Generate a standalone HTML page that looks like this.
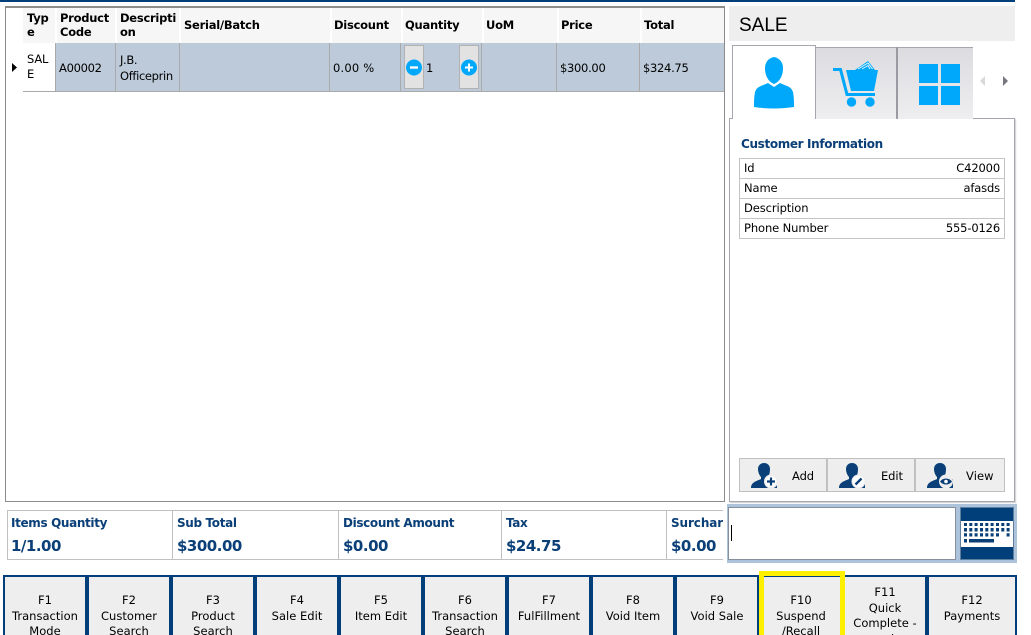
<!DOCTYPE html>
<html><head><meta charset="utf-8"><style>
html,body{margin:0;padding:0;background:#fff}
#p{position:relative;width:1031px;height:635px;overflow:hidden;background:#fff;font-family:"DejaVu Sans","Liberation Sans",sans-serif;font-size:11.5px;color:#000}
#p div,#p span{position:absolute;box-sizing:border-box}
.t{white-space:nowrap;line-height:14px}
.h{font-weight:bold;font-size:11.5px;line-height:14px;white-space:nowrap;letter-spacing:-.25px;color:#000}
.v{position:absolute;width:1px;background:#a9a9a9}
.w{position:absolute;width:2px;background:#fff}
.l{font-weight:bold;font-size:12px;color:#0a3f77;white-space:nowrap;letter-spacing:-.35px;line-height:14px}
.n{font-weight:bold;font-size:15px;color:#0a3f77;white-space:nowrap;line-height:18px;letter-spacing:-.5px}
.f{top:577px;height:58px;width:80px;background:#eee;text-align:center;line-height:15.5px;font-size:11.5px;letter-spacing:.02px;padding-top:16px;white-space:nowrap;color:#000}
.f.o{padding-top:8px}
.r{left:740px;width:264px;height:20px;border-bottom:1px solid #c4c4c4;line-height:19px;padding:0 4px;letter-spacing:-.1px}
.r b{font-weight:normal;position:absolute;right:4px;top:0;letter-spacing:-.15px}
.b{top:458px;height:34px;background:#eee;border:1px solid #c0c0c0}
</style></head><body><div id="p">
<div style="left:0;top:0;width:1015px;height:2px;background:#003f7a"></div>

<div style="left:5px;top:6px;width:720px;height:496px;border:1px solid #8c8c8c;border-top-width:2px;background:#fff"></div>
<div style="left:23px;top:8px;width:701px;height:35px;background:#f6f6f6"></div>
<div style="left:23px;top:43px;width:33px;height:48px;background:#fff"></div>
<div style="left:56px;top:43px;width:668px;height:48px;background:#bccad9"></div>
<div style="left:23px;top:91px;width:701px;height:1px;background:#a9a9a9"></div>
<div class="w" style="left:55px;top:8px;height:35px"></div>
<div class="w" style="left:115px;top:8px;height:35px"></div>
<div class="w" style="left:179px;top:8px;height:35px"></div>
<div class="w" style="left:330px;top:8px;height:35px"></div>
<div class="w" style="left:401px;top:8px;height:35px"></div>
<div class="w" style="left:482px;top:8px;height:35px"></div>
<div class="w" style="left:557px;top:8px;height:35px"></div>
<div class="w" style="left:640px;top:8px;height:35px"></div>
<div class="v" style="left:55px;top:43px;height:48px"></div>
<div class="v" style="left:115px;top:43px;height:48px"></div>
<div class="v" style="left:179px;top:43px;height:48px"></div>
<div class="v" style="left:329px;top:43px;height:48px"></div>
<div class="v" style="left:400px;top:43px;height:48px"></div>
<div class="v" style="left:481px;top:43px;height:48px"></div>
<div class="v" style="left:556px;top:43px;height:48px"></div>
<div class="v" style="left:639px;top:43px;height:48px"></div>

<span class="h" style="left:27px;top:11px">Typ<br>e</span>
<span class="h" style="left:60px;top:11px">Product<br>Code</span>
<span class="h" style="left:120px;top:11px">Descripti<br>on</span>
<span class="h" style="left:184px;top:18px">Serial/Batch</span>
<span class="h" style="left:334px;top:18px">Discount</span>
<span class="h" style="left:405px;top:18px">Quantity</span>
<span class="h" style="left:486px;top:18px">UoM</span>
<span class="h" style="left:561px;top:18px">Price</span>
<span class="h" style="left:644px;top:18px">Total</span>

<svg style="position:absolute;left:11px;top:63px" width="7" height="9"><path d="M1 0L6 4.5L1 9Z" fill="#000"/></svg>
<span class="t" style="left:27px;top:52px;line-height:15px;letter-spacing:-.2px">SAL<br>E</span>
<span class="t" style="left:59px;top:61px;letter-spacing:-.3px">A00002</span>
<span class="t" style="left:120px;top:52px;line-height:16px;letter-spacing:-.35px">J.B.<br>Officeprin</span>
<span class="t" style="left:333px;top:61px;letter-spacing:.2px">0.00 %</span>
<div style="left:404px;top:45px;width:20px;height:44px;background:#e2e2e2;border:1px solid #b2b2b2"></div>
<div style="left:459px;top:45px;width:20px;height:44px;background:#e2e2e2;border:1px solid #b2b2b2"></div>
<svg style="position:absolute;left:405px;top:59px" width="18" height="17"><circle cx="9" cy="8.5" r="8" fill="#00a8fb"/><rect x="5" y="7.3" width="8" height="2.4" fill="#fff"/></svg>
<svg style="position:absolute;left:460px;top:59px" width="18" height="17"><circle cx="9" cy="8.5" r="8" fill="#00a8fb"/><rect x="5" y="7.5" width="8" height="2" fill="#fff"/><rect x="8" y="4.5" width="2" height="8" fill="#fff"/></svg>
<span class="t" style="left:426px;top:61px">1</span>
<span class="t" style="left:560px;top:61px;letter-spacing:-.3px">$300.00</span>
<span class="t" style="left:643px;top:61px;letter-spacing:-.3px">$324.75</span>

<div style="left:729px;top:6px;width:286px;height:35px;background:#eee"></div>
<span style="left:739px;top:14px;font-size:19px;line-height:24px;color:#000;font-family:'Liberation Sans',sans-serif">SALE</span>

<div style="left:729px;top:118px;width:286px;height:384px;border:1px solid #a6a6ae;background:#fff;box-shadow:1px 1px 1px #ccc"></div>
<div style="left:816px;top:47px;width:80px;height:72px;background:linear-gradient(#dcdce0,#eeeef0);border-top:1px solid #a6a6ae"></div>
<div style="left:898px;top:47px;width:75px;height:72px;background:linear-gradient(#dcdce0,#eeeef0);border-top:1px solid #a6a6ae"></div>
<div style="left:896px;top:47px;width:2px;height:71px;background:#9a9aa2"></div>
<div style="left:732px;top:45px;width:84px;height:74px;background:#fff;border:1px solid #a6a6ae;border-bottom:none"></div>

<svg style="position:absolute;left:750px;top:55px" width="48" height="55" viewBox="0 0 48 55" fill="#00a8fb"><path d="M24 2C18 3 15 8 15 13C15 19 17 26 24 29C31 26 33 19 33 13C33 8 30 3 24 2Z"/><path d="M18 28L24 32L30 28C36 31 41 31 43 37C44 42 44 47 44 52C30 54 18 54 4 52C4 47 4 42 5 37C7 31 12 31 18 28Z"/></svg>
<svg style="position:absolute;left:830px;top:58px" width="50" height="52" viewBox="0 0 50 52"><path d="M3 11.5H10.5L17 36.5H45" fill="none" stroke="#00a8fb" stroke-width="3"/><path d="M16 12H48L44 33H21Z" fill="#00a8fb"/><path d="M25 12L38 3L45 12Z" fill="#00a8fb"/><path d="M28 11L38 5L42.5 11M32 11L38 7.5L40 11" fill="none" stroke="#e4f4fd" stroke-width="1"/><circle cx="21.5" cy="44" r="4.7" fill="#00a8fb"/><circle cx="40" cy="44" r="4.7" fill="#00a8fb"/></svg>
<svg style="position:absolute;left:919px;top:64px" width="41" height="42" fill="#00a8fb"><rect width="19" height="19" x="0" y="0"/><rect width="19" height="19" x="22" y="0"/><rect width="19" height="19" x="0" y="22"/><rect width="19" height="19" x="22" y="22"/></svg>
<svg style="position:absolute;left:979px;top:75px" width="30" height="12"><path d="M6 1V11L1 6Z" fill="#d8d8d8"/><path d="M24 1V11L29 6Z" fill="#77777f"/></svg>

<span class="l" style="left:741px;top:137px">Customer Information</span>
<div style="left:739px;top:158px;width:266px;height:81px;border:1px solid #c4c4c4"></div>
<div class="r" style="top:159px">Id<b>C42000</b></div>
<div class="r" style="top:179px">Name<b>afasds</b></div>
<div class="r" style="top:199px">Description</div>
<div class="r" style="top:219px;border-bottom:none">Phone Number<b>555-0126</b></div>

<div class="b" style="left:739px;width:88px"></div>
<div class="b" style="left:827px;width:88px"></div>
<div class="b" style="left:915px;width:90px"></div>
<svg style="position:absolute;left:750px;top:462px" width="30" height="28" viewBox="0 0 30 28"><path d="M14 1C10 1 8 4 8 7C8 11 10 14 11 15V17C7 19 1 20 1 26H27V17L18 17V15C19 14 20 11 20 7C20 4 18 1 14 1Z" fill="#0a3f77"/><circle cx="21" cy="19.5" r="7" fill="#eee"/><circle cx="21" cy="19.5" r="5.5" fill="#fff"/><path d="M17 19.5H25M21 15.5V23.5" stroke="#0a3f77" stroke-width="2.2"/></svg>
<svg style="position:absolute;left:838px;top:462px" width="30" height="28" viewBox="0 0 30 28"><path d="M14 1C10 1 8 4 8 7C8 11 10 14 11 15V17C7 19 1 20 1 26H27V17L18 17V15C19 14 20 11 20 7C20 4 18 1 14 1Z" fill="#0a3f77"/><circle cx="20.5" cy="19.5" r="7" fill="#eee"/><circle cx="20.5" cy="19.5" r="5.8" fill="#fff"/><path d="M17.5 22.5L23.5 16.5" stroke="#0a3f77" stroke-width="2.4"/></svg>
<svg style="position:absolute;left:926px;top:462px" width="30" height="28" viewBox="0 0 30 28"><path d="M14 1C10 1 8 4 8 7C8 11 10 14 11 15V17C7 19 1 20 1 26H27V17L18 17V15C19 14 20 11 20 7C20 4 18 1 14 1Z" fill="#0a3f77"/><circle cx="20" cy="19.5" r="7" fill="#eee"/><path d="M14 19.5C17 15.5 23 15.5 26 19.5C23 23.5 17 23.5 14 19.5Z" fill="#0a3f77"/><circle cx="20" cy="19.5" r="1.8" fill="#fff"/></svg>
<span class="t" style="left:792px;top:469px;letter-spacing:-.1px">Add</span>
<span class="t" style="left:881px;top:469px;letter-spacing:-.1px">Edit</span>
<span class="t" style="left:966px;top:469px;letter-spacing:.1px">View</span>

<div style="left:727px;top:504px;width:290px;height:59px;background:#adc3dc"></div>
<div style="left:728px;top:507px;width:228px;height:53px;background:#fff;border:1px solid #85909c"></div>
<div style="left:731px;top:525px;width:1px;height:16px;background:#000"></div>
<div style="left:960px;top:507px;width:54px;height:53px;background:#003f7a;border:1px solid #5f7f9f"></div>
<div style="left:961px;top:521px;width:52px;height:26px;background:#fff"></div>
<svg style="position:absolute;left:964px;top:523px" width="47" height="21" fill="#0a3f77"><path d="M0 0h3v3h-3zM5.3 0h3v3h-3zM10.6 0h3v3h-3zM16 0h3v3h-3zM21.3 0h3v3h-3zM26.6 0h3v3h-3zM32 0h3v3h-3zM37.3 0h3v3h-3zM42.6 0h3v3h-3zM0 5h3v3.5h-3zM5.3 5h3v3.5h-3zM10.6 5h3v3.5h-3zM16 5h3v3.5h-3zM21.3 5h3v3.5h-3zM26.6 5h3v3.5h-3zM32 5h3v3.5h-3zM37.3 5h3v3.5h-3zM42.6 5h3v3.5h-3zM0 10.3h3v3.2h-3zM5.3 10.3h3v3.2h-3zM10.6 10.3h3v3.2h-3zM16 10.3h3v3.2h-3zM21.3 10.3h3v3.2h-3zM26.6 10.3h3v3.2h-3zM32 10.3h3v3.2h-3zM42.6 10.3h3v3.2h-3zM0 16h3v3.5h-3zM5 16h25v3.5h-25z"/></svg>

<div style="left:7px;top:510px;width:716px;height:50px;border:1px solid #c0c0c0;border-right:none"></div>
<div class="v" style="left:172px;top:510px;height:50px;background:#c0c0c0"></div>
<div class="v" style="left:338px;top:510px;height:50px;background:#c0c0c0"></div>
<div class="v" style="left:501px;top:510px;height:50px;background:#c0c0c0"></div>
<div class="v" style="left:666px;top:510px;height:50px;background:#c0c0c0"></div>
<span class="l" style="left:11px;top:516px">Items Quantity</span><span class="n" style="left:11px;top:537px">1/1.00</span>
<span class="l" style="left:177px;top:516px">Sub Total</span><span class="n" style="left:177px;top:537px">$300.00</span>
<span class="l" style="left:343px;top:516px">Discount Amount</span><span class="n" style="left:343px;top:537px">$0.00</span>
<span class="l" style="left:506px;top:516px">Tax</span><span class="n" style="left:506px;top:537px">$24.75</span>
<div style="left:671px;top:512px;width:52px;height:46px;overflow:hidden"><span class="l" style="left:0;top:4px;letter-spacing:-.1px">Surcharge</span><span class="n" style="left:0;top:25px">$0.00</span></div>

<div style="left:3px;top:575px;width:1014px;height:60px;background:#003f7a"></div>
<div class="f" style="left:5px">F1<br>Transaction<br>Mode</div>
<div class="f" style="left:89px">F2<br>Customer<br>Search</div>
<div class="f" style="left:173px">F3<br>Product<br>Search</div>
<div class="f" style="left:257px">F4<br>Sale Edit</div>
<div class="f" style="left:341px">F5<br>Item Edit</div>
<div class="f" style="left:425px">F6<br>Transaction<br>Search</div>
<div class="f" style="left:509px">F7<br>FulFillment</div>
<div class="f" style="left:593px">F8<br>Void Item</div>
<div class="f" style="left:677px">F9<br>Void Sale</div>
<div class="f" style="left:761px">F10<br>Suspend<br>/Recall</div>
<div class="f o" style="left:845px">F11<br>Quick<br>Complete -<br>cash</div>
<div class="f" style="left:929px;width:86px">F12<br>Payments</div>
<div style="left:759px;top:571px;width:86px;height:70px;border:5px solid #ffef00"></div>
</div></body></html>
